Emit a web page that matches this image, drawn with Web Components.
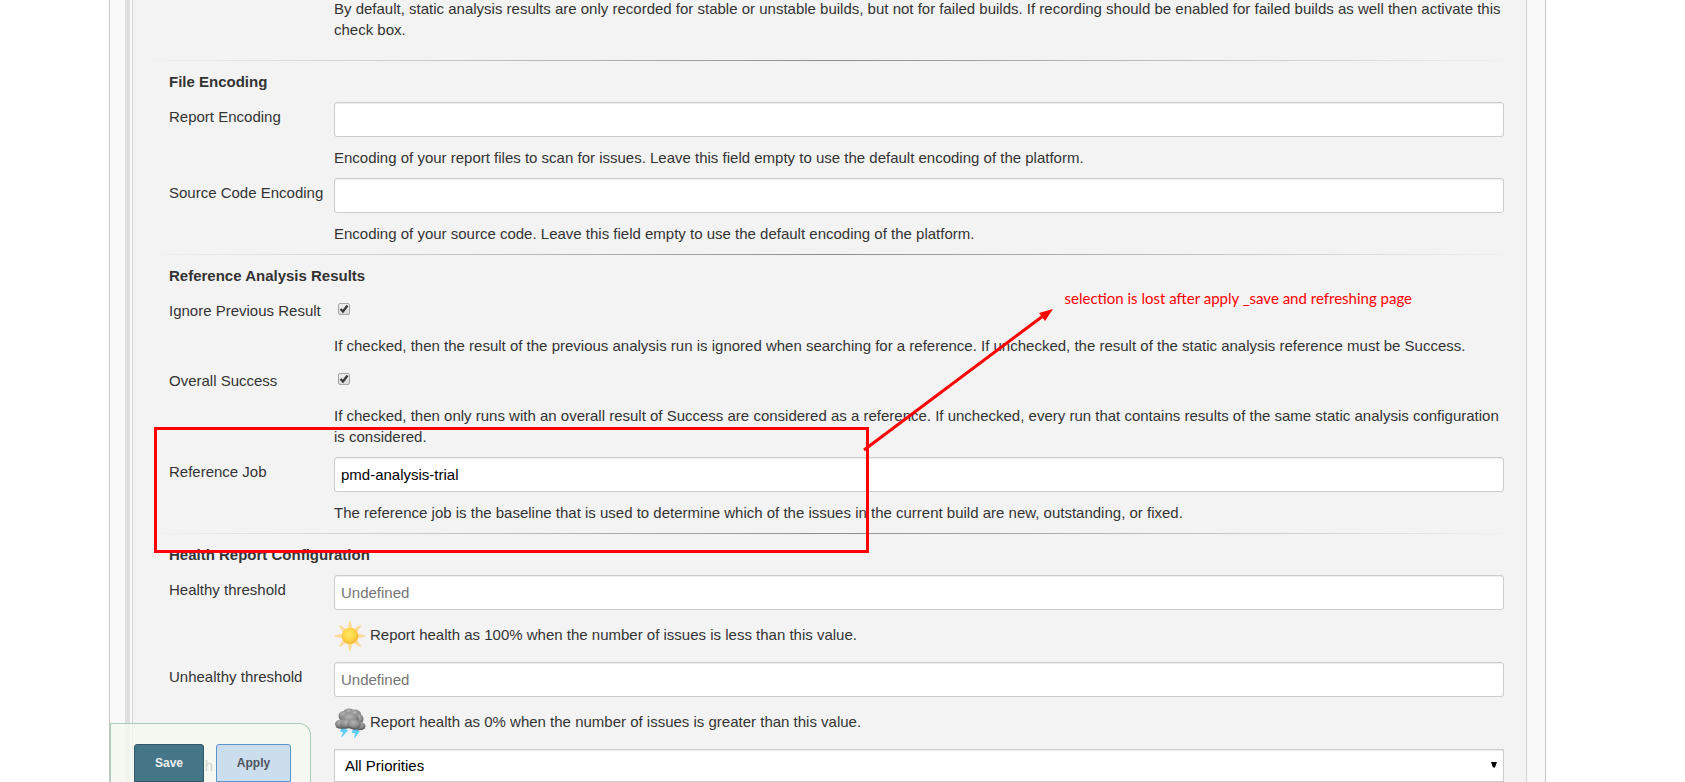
<!DOCTYPE html>
<html lang="en">
<head>
<meta charset="utf-8">
<title>Job configuration</title>
<style>
body { margin: 0; background: #fff; color: #333; font: 15px/21px "Liberation Sans", Arial, sans-serif; overflow: hidden; }
</style>
</head>
<body>
<config-page>
  <form-help>By default, static analysis results are only recorded for stable or unstable builds, but not for failed builds. If recording should be enabled for failed builds as well then activate this check box.</form-help>
  <form-section heading="File Encoding" class="spaced">
    <text-field label="Report Encoding"></text-field>
    <form-help>Encoding of your report files to scan for issues. Leave this field empty to use the default encoding of the platform.</form-help>
    <text-field label="Source Code Encoding"></text-field>
    <form-help>Encoding of your source code. Leave this field empty to use the default encoding of the platform.</form-help>
  </form-section>
  <form-section heading="Reference Analysis Results">
    <check-field label="Ignore Previous Result"></check-field>
    <form-help>If checked, then the result of the previous analysis run is ignored when searching for a reference. If unchecked, the result of the static analysis reference must be Success.</form-help>
    <check-field label="Overall Success"></check-field>
    <form-help>If checked, then only runs with an overall result of Success are considered as a reference. If unchecked, every run that contains results of the same static analysis configuration is considered.</form-help>
    <text-field label="Reference Job" value="pmd-analysis-trial"></text-field>
    <form-help>The reference job is the baseline that is used to determine which of the issues in the current build are new, outstanding, or fixed.</form-help>
  </form-section>
  <form-section heading="Health Report Configuration">
    <text-field label="Healthy threshold" placeholder="Undefined"></text-field>
    <form-help class="with-icon"><weather-icon slot="icon" kind="sun"></weather-icon>Report health as 100% when the number of issues is less than this value.</form-help>
    <text-field label="Unhealthy threshold" placeholder="Undefined"></text-field>
    <form-help class="with-icon"><weather-icon slot="icon" kind="storm"></weather-icon>Report health as 0% when the number of issues is greater than this value.</form-help>
    <select-field label="h"></select-field>
  </form-section>
</config-page>
<save-bar></save-bar>
<markup-note>selection is lost after apply _save and refreshing page</markup-note>

<script>
const define = (name, html, setup) => customElements.define(name, class extends HTMLElement {
  constructor() {
    super();
    const t = document.createElement('template');
    t.innerHTML = html;
    this.attachShadow({ mode: 'open' }).append(t.content.cloneNode(true));
  }
  connectedCallback() { if (setup) setup(this, this.shadowRoot); }
});

const rowStyle = `
  :host { display: grid; grid-template-columns: 165px minmax(0, 1fr); align-items: start; }
  label { padding-top: 4px; white-space: nowrap; }`;

const boxStyle = `
  box-sizing: border-box; width: 100%; margin: 0; border: 1px solid #ccc; background: #fff;
  box-shadow: inset 0 1px 1px rgba(0,0,0,.075); font: inherit; color: #000;`;

define('config-page', `
  <style>
    :host { display: block; padding: 0 139px 0 109px; }
    .outer { display: flex; border: solid #c8c8c8; border-width: 0 1px; background: #f9f9f9; padding: 0 18px 0 15px; }
    .bar { flex: none; width: 5px; margin-right: 2px; background: #dfdfdf; }
    form { flex: 1; min-width: 0; display: flex; flex-direction: column; gap: 10px; border: solid #d4d4d4; border-width: 0 1px;
      background: #f3f3f3; padding: 0 22px 10px 36px; margin-top: -2px; }
  </style>
  <div class="outer"><div class="bar"></div><form><slot></slot></form></div>`);

define('form-section', `
  <style>
    :host { display: flex; flex-direction: column; gap: 10px; }
    :host(.spaced) { padding-top: 10px; }
    hr { align-self: stretch; height: 1px; border: 0; margin: 0 -16px 0 -30px;
      background: linear-gradient(to right, rgba(0,0,0,0), rgba(0,0,0,.42), rgba(0,0,0,0)); }
    h2 { margin: 0; font: inherit; font-weight: bold; }
  </style>
  <hr><h2></h2><slot></slot>`,
  (el, root) => { root.querySelector('h2').textContent = el.getAttribute('heading'); });

define('form-help', `
  <style>
    :host { display: flex; gap: 4px; margin-left: 165px; }
    :host(.with-icon) div { padding-top: 4px; }
  </style>
  <slot name="icon"></slot><div><slot></slot></div>`);

define('text-field', `
  <style>${rowStyle}
    input { ${boxStyle} height: 35px; padding: 0 6px; border-radius: 3px; }
    input::placeholder { color: #757575; }
  </style>
  <label for="f"></label><input id="f" type="text">`,
  (el, root) => {
    root.querySelector('label').textContent = el.getAttribute('label');
    const input = root.querySelector('input');
    input.value = el.getAttribute('value') || '';
    input.placeholder = el.getAttribute('placeholder') || '';
  });

define('check-field', `
  <style>${rowStyle}
    :host { min-height: 29px; }
    .box { display: grid; width: 12px; margin: 7px 0 0 4px; }
    input, svg { grid-area: 1 / 1; width: 12px; height: 12px; }
    input { appearance: none; box-sizing: border-box; margin: 0; border: 1px solid #a6a6a6; border-radius: 2px;
      background: linear-gradient(#eee, #dcdcdc); }
    svg { pointer-events: none; }
    input:not(:checked) + svg { visibility: hidden; }
  </style>
  <label for="f"></label>
  <span class="box"><input id="f" type="checkbox" checked>
    <svg viewBox="0 0 12 12"><path d="M2.500 6 5 8.500 9.500 2.500" fill="none" stroke="#3c3c3c" stroke-width="2.4"/></svg></span>`,
  (el, root) => { root.querySelector('label').textContent = el.getAttribute('label'); });

define('select-field', `
  <style>${rowStyle}
    label { text-align: right; padding-right: 121px; padding-top: 6px; }
    .wrap { display: grid; align-items: center; }
    select, svg { grid-area: 1 / 1; }
    select { ${boxStyle} appearance: none; height: 33px; padding: 0 10px; border-radius: 0; }
    svg { justify-self: end; width: 6px; height: 6px; margin: 0 7px 2px 0; pointer-events: none; }
  </style>
  <label for="f"></label>
  <span class="wrap"><select id="f"><option>All Priorities</option></select>
    <svg viewBox="0 0 6 6"><path d="M0 0h6L4 5.500H2z"/></svg></span>`,
  (el, root) => { root.querySelector('label').textContent = el.getAttribute('label'); });

const sun = `<svg viewBox="0 0 32 32">
  <defs><radialGradient id="s" cx=".45" cy=".4"><stop offset="0" stop-color="#ffe765"/><stop offset=".7" stop-color="#ffd545"/><stop offset="1" stop-color="#f8bd3c"/></radialGradient></defs>
  <g fill="#fbdb9b">
    <path id="r" d="M15.300 1h1.400L18.500 9h-5z"/><use href="#r" transform="rotate(45 16 16)"/><use href="#r" transform="rotate(90 16 16)"/>
    <use href="#r" transform="rotate(135 16 16)"/><use href="#r" transform="rotate(180 16 16)"/><use href="#r" transform="rotate(225 16 16)"/>
    <use href="#r" transform="rotate(270 16 16)"/><use href="#r" transform="rotate(315 16 16)"/>
  </g><circle cx="16" cy="16" r="8.3" fill="url(#s)"/></svg>`;
const storm = `<svg viewBox="0 0 32 32">
  <defs><radialGradient id="a" cx=".45" cy=".3" r=".75"><stop offset="0" stop-color="#b4b4b4"/><stop offset=".5" stop-color="#8f8f8f"/><stop offset="1" stop-color="#555"/></radialGradient></defs>
  <path d="M8 19h6l-2 4h2.500l-7.500 8 2-6H6zM20 20h6l-2 4h2l-6 8 1-6h-3.500z" fill="#62cdf6"/>
  <g fill="url(#a)">
    <ellipse cx="15" cy="6" rx="6" ry="4.500"/><ellipse cx="21" cy="7.500" rx="6" ry="5"/><ellipse cx="10" cy="9" rx="5.500" ry="5"/>
    <ellipse cx="25" cy="12" rx="4.500" ry="5"/><ellipse cx="16" cy="12" rx="9" ry="6"/>
    <ellipse cx="7" cy="17" rx="6" ry="4.500"/><ellipse cx="13" cy="17" rx="7" ry="4.500"/>
    <ellipse cx="26" cy="19" rx="5.500" ry="4"/><ellipse cx="20" cy="17.500" rx="7" ry="5"/>
  </g>
  <path d="M2 20c4 2 9 2 13 0 4 3 11 4 16 1" fill="none" stroke="#555" stroke-width="1.200" opacity=".6"/></svg>`;
define('weather-icon', `
  <style>:host { display: block; flex: none; width: 32px; height: 32px; } svg { display: block; width: 32px; height: 32px; }</style>`,
  (el, root) => { root.append(document.createRange().createContextualFragment(el.getAttribute('kind') === 'sun' ? sun : storm)); });

define('save-bar', `
  <style>
    :host { position: fixed; left: 110px; bottom: 0; display: flex; gap: 12px; padding: 20px 19px 0 23px;
      border: 1px solid #a8ceb9; border-width: 1px 1px 0; border-radius: 0 12px 0 0; background: rgba(245,249,239,.8); }
    button { box-sizing: border-box; height: 38px; margin: 0; padding: 0; border: 1px solid; border-radius: 3px 3px 0 0;
      font: bold 12px/36px "Liberation Sans", Arial, sans-serif; }
    .save { width: 70px; background: #447688; border-color: #2f5868; color: #eee; }
    .apply { width: 75px; background: #ccdded; border-color: #5b94cd; color: #4d545d; }
  </style>
  <button class="save" type="submit">Save</button><button class="apply" type="button">Apply</button>`);

define('markup-note', `
  <style>
    :host { position: absolute; left: 154px; top: 290px; width: 1260px; height: 265px; color: #f00; pointer-events: none; }
    svg { position: absolute; inset: 0; width: 100%; height: 100%; }
    .frame { position: absolute; left: 0; top: 137px; box-sizing: border-box; width: 715px; height: 126px; border: 3px solid; }
    p { position: absolute; right: 2px; top: 0; margin: 0; font: 15px/16px Lato, sans-serif; white-space: nowrap; }
  </style>
  <div class="frame"></div>
  <svg><path d="M710 160 889 26" stroke="#f00" stroke-width="3"/><path d="M899 19 885 23 891 31z" fill="#f00"/></svg>
  <p><slot></slot></p>`);
</script>
</body>
</html>
